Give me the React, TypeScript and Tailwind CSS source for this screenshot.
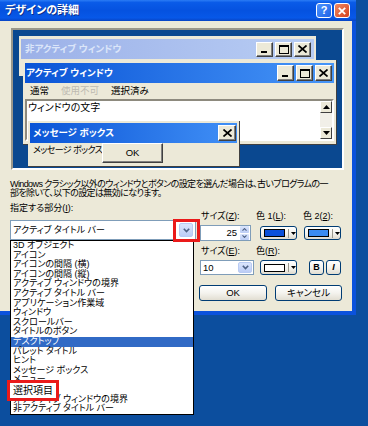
import React from "react";

// Caption button of the classic preview windows
function Caption({ kind, size = "h-[15px] w-[17px]" }: { kind: "min" | "max" | "close"; size?: string }) {
  return (
    <div
      className={`flex ${size} items-center justify-center border border-t-white border-l-white border-r-[#404040] border-b-[#404040] bg-[#ece9d8] shadow-[inset_-1px_-1px_0_#808080]`}
    >
      {kind === "min" && (
        <svg width="9" height="9" viewBox="0 0 9 9">
          <rect x="1" y="6" width="6" height="2" fill="#000" />
        </svg>
      )}
      {kind === "max" && (
        <svg width="10" height="9" viewBox="0 0 10 9">
          <rect x="0.5" y="0.5" width="9" height="8" fill="none" stroke="#000" />
          <rect x="0" y="0" width="10" height="2" fill="#000" />
        </svg>
      )}
      {kind === "close" && (
        <svg width="9" height="8" viewBox="0 0 9 8">
          <path d="M0.5 0.5 L8.5 7.5 M8.5 0.5 L0.5 7.5" stroke="#000" strokeWidth="1.7" />
        </svg>
      )}
    </div>
  );
}

function Chevron() {
  return (
    <svg width="7" height="5" viewBox="0 0 7 5">
      <path d="M0.8 0.8 L3.5 3.6 L6.2 0.8" fill="none" stroke="#4d6185" strokeWidth="1.6" />
    </svg>
  );
}

function ArrowBtn() {
  return (
    <div className="flex h-full w-[14px] items-center justify-center rounded-[2px] border border-[#b9cbf3] bg-[linear-gradient(#dbe5fc,#bccdf6)]">
      <Chevron />
    </div>
  );
}

function ColorBtn({ swatch, h }: { swatch: string; h: string }) {
  return (
    <div
      className={`flex ${h} w-[37px] items-center rounded-[3px] border border-[#003c74] bg-[linear-gradient(#ffffff,#f3f2ec_60%,#dedace)] pl-[3px]`}
    >
      <div className={`h-[8px] w-[21px] border border-black ${swatch}`} />
      <div className="ml-[3px] h-[9px] w-px bg-[#9c9a90]" />
      <svg className="ml-[2px]" width="5" height="3" viewBox="0 0 5 3">
        <path d="M0 0 H5 L2.5 3 Z" fill="#000" />
      </svg>
    </div>
  );
}

// "選択項目" (index 15) is drawn by the red mark laid over the list
const LIST = [
  "3D オブジェクト",
  "アイコン",
  "アイコンの間隔 (横)",
  "アイコンの間隔 (縦)",
  "アクティブ ウィンドウの境界",
  "アクティブ タイトル バー",
  "アプリケーション作業域",
  "ウィンドウ",
  "スクロールバー",
  "タイトルのボタン",
  "デスクトップ",
  "パレット タイトル",
  "ヒント",
  "メッセージ ボックス",
  "メニュー",
  "",
  "非アクティブ ウィンドウの境界",
  "非アクティブ タイトル バー",
];

const xpBtn =
  "flex items-center justify-center rounded-[3px] border border-[#003c74] bg-[linear-gradient(#ffffff,#f4f3ee_50%,#e2ded2)]";

export default function App() {
  return (
    <div className="relative h-[426px] w-[368px] overflow-hidden bg-[#0c4e9e] font-['Liberation_Sans','Noto_Sans_CJK_JP',sans-serif] text-black [font-feature-settings:'palt']">
      {/* dialog window */}
      <div className="w-[356px] bg-[#0b52dc]">
        {/* title bar */}
        <div className="flex h-[21px] items-center bg-[linear-gradient(180deg,#2b7cf5_0%,#0a5be8_12%,#0552e0_50%,#0758e8_85%,#0844c4_100%)] pl-[5px] pr-[6px]">
          <span className="text-[11px] font-bold leading-none text-white [text-shadow:1px_1px_#0a2f8a]">
            デザインの詳細
          </span>
          <div className="ml-auto flex gap-[2px]">
            <div className="flex h-[15px] w-[16px] items-center justify-center rounded-[3px] border border-white bg-[linear-gradient(135deg,#4d94ff,#1f62e6)] text-[11px] font-bold leading-none text-white">
              ?
            </div>
            <div className="flex h-[15px] w-[16px] items-center justify-center rounded-[3px] border border-white bg-[linear-gradient(135deg,#ef8a63,#d4401c)]">
              <svg width="8" height="8" viewBox="0 0 8 8">
                <path d="M0.8 0.8 L7.2 7.2 M7.2 0.8 L0.8 7.2" stroke="#fff" strokeWidth="1.8" />
              </svg>
            </div>
          </div>
        </div>

        <div className="pb-[4px] pr-[4px]">
          <div className="h-[290px] bg-[#ece9d8] pt-[7px]">
            {/* preview */}
            <div className="relative ml-[11px] h-[142px] w-[333px] border-2 border-t-[#9a978b] border-l-[#9a978b] border-b-white border-r-white bg-[#0a4890]">
              {/* inactive window */}
              <div className="absolute left-[6px] top-[6px] h-[40px] w-[297px] bg-[#ece9d8] px-[2px] pt-[3px]">
                <div className="flex h-[20px] items-center bg-[linear-gradient(90deg,#9cb1e8,#b8cdf4)] pl-[4px] pr-[3px]">
                  <span className="text-[9.5px] font-bold leading-none text-[#dbe5f9]">非アクティブ ウィンドウ</span>
                  <div className="ml-auto flex gap-[2px]">
                    <Caption kind="min" />
                    <Caption kind="max" />
                    <Caption kind="close" />
                  </div>
                </div>
              </div>

              {/* active window */}
              <div className="absolute left-[10px] top-[30px] h-[85px] w-[314px] border-r border-b border-r-[#404040] border-b-[#404040] bg-[#ece9d8] px-[2px] pt-[3px]">
                <div className="flex h-[20px] items-center bg-[linear-gradient(90deg,#0a54d6,#4796f8)] pl-[1px] pr-[2px]">
                  <span className="text-[9.5px] font-bold leading-none text-white">アクティブ ウィンドウ</span>
                  <div className="ml-auto flex gap-[2px]">
                    <Caption kind="min" size="h-[16px] w-[17px]" />
                    <Caption kind="max" size="h-[16px] w-[17px]" />
                    <Caption kind="close" size="h-[16px] w-[17px]" />
                  </div>
                </div>
                <div className="flex h-[16px] items-center pl-[5px] text-[9.5px] leading-none">
                  <span>通常</span>
                  <span className="ml-[12px] text-[#bdbab0]">使用不可</span>
                  <span className="ml-[12px]">選択済み</span>
                </div>
                <div className="flex h-[42px] border-2 border-t-[#8d8a7e] border-l-[#8d8a7e] border-b-white border-r-white bg-white">
                  <div className="flex-1 pl-[1px] pt-[1px] text-[10px] leading-[11px]">ウィンドウの文字</div>
                  <div className="flex w-[12px] flex-col bg-[#f1efe8]">
                    <div className="flex h-[12px] items-center justify-center border border-t-white border-l-white border-r-[#404040] border-b-[#404040] bg-[#ece9d8]">
                      <svg width="7" height="4" viewBox="0 0 7 4">
                        <path d="M3.5 0 L7 4 H0 Z" fill="#000" />
                      </svg>
                    </div>
                    <div className="flex-1" />
                    <div className="flex h-[12px] items-center justify-center border border-t-white border-l-white border-r-[#404040] border-b-[#404040] bg-[#ece9d8]">
                      <svg width="7" height="4" viewBox="0 0 7 4">
                        <path d="M0 0 H7 L3.5 4 Z" fill="#000" />
                      </svg>
                    </div>
                  </div>
                </div>
              </div>

              {/* message box */}
              <div className="absolute left-[15px] top-[91px] h-[46px] w-[212px] border-r border-b border-r-[#404040] border-b-[#404040] bg-[#ece9d8] px-[2px] pt-[2px]">
                <div className="flex h-[20px] items-center bg-[linear-gradient(90deg,#0a54d6,#4190f6)] pl-[3px] pr-[1px]">
                  <span className="text-[9.5px] font-bold leading-none text-white">メッセージ ボックス</span>
                  <div className="ml-auto">
                    <Caption kind="close" size="h-[16px] w-[18px]" />
                  </div>
                </div>
                <div className="whitespace-nowrap pl-[3px] pt-[3px] text-[9px] leading-none tracking-[-0.6px]">
                  メッセージ ボックスの文字
                </div>
                <div className="absolute left-[74px] top-[22px] flex h-[20px] w-[61px] items-center justify-center border border-t-white border-l-white border-r-[#404040] border-b-[#404040] bg-[#ece9d8] text-[9.5px] leading-none shadow-[inset_-1px_-1px_0_#808080]">
                  OK
                </div>
              </div>
            </div>

            {/* note */}
            <div className="ml-[10px] mt-[10px] whitespace-nowrap text-[9px] leading-[9px] tracking-[-0.6px]">
              <div>Windows クラシック以外のウィンドウとボタンの設定を選んだ場合は、古いプログラムの一</div>
              <div>部を除いて、以下の設定は無効になります。</div>
            </div>

            {/* controls */}
            <div className="mt-[6px] flex items-start">
              <div className="ml-[10px] w-[186px]">
                <div className="text-[9px] leading-[9px]">
                  指定する部分(<span className="underline">I</span>):
                </div>
                <div className="mt-[7px] flex h-[20px] items-center border border-[#7f9db9] bg-white py-[2px] pl-[2px] pr-[2px]">
                  <span className="flex-1 text-[9px] leading-none">アクティブ タイトル バー</span>
                  <ArrowBtn />
                </div>
              </div>

              <div className="ml-[4px] mt-[8px] w-[148px] text-[9px] leading-[9px]">
                <div className="flex">
                  <span className="w-[56px] pl-[1px]">
                    サイズ(<span className="underline">Z</span>):
                  </span>
                  <span className="w-[47px]">
                    色 1(<span className="underline">L</span>):
                  </span>
                  <span>
                    色 2(<span className="underline">2</span>):
                  </span>
                </div>
                <div className="mt-[4px] flex items-center">
                  <div className="flex h-[16px] w-[51px] items-center border border-[#7f9db9] bg-white">
                    <span className="flex-1 pr-[3px] text-right text-[9.5px] leading-none">25</span>
                    <div className="mr-[1px] flex h-[14px] w-[9px] flex-col gap-px">
                      <div className="flex flex-1 items-center justify-center rounded-[1px] bg-[linear-gradient(#dbe5fc,#bccdf6)]">
                        <svg width="5" height="3" viewBox="0 0 5 3">
                          <path d="M0.5 2.6 L2.5 0.6 L4.5 2.6" fill="none" stroke="#4d6185" strokeWidth="1.1" />
                        </svg>
                      </div>
                      <div className="flex flex-1 items-center justify-center rounded-[1px] bg-[linear-gradient(#dbe5fc,#bccdf6)]">
                        <svg width="5" height="3" viewBox="0 0 5 3">
                          <path d="M0.5 0.4 L2.5 2.4 L4.5 0.4" fill="none" stroke="#4d6185" strokeWidth="1.1" />
                        </svg>
                      </div>
                    </div>
                  </div>
                  <div className="ml-[9px]">
                    <ColorBtn swatch="bg-[#0a50da]" h="h-[14px]" />
                  </div>
                  <div className="ml-[7px]">
                    <ColorBtn swatch="bg-[#3b8cf2]" h="h-[14px]" />
                  </div>
                </div>

                <div className="mt-[6px] flex">
                  <span className="w-[56px] pl-[1px]">
                    サイズ(<span className="underline">E</span>):
                  </span>
                  <span>
                    色(<span className="underline">R</span>):
                  </span>
                </div>
                <div className="mt-[4px] flex items-center">
                  <div className="flex h-[15px] w-[54px] items-center border border-[#7f9db9] bg-white py-[1px] pl-[2px] pr-[1px]">
                    <span className="flex-1 text-[9.5px] leading-none">10</span>
                    <ArrowBtn />
                  </div>
                  <div className="ml-[6px]">
                    <ColorBtn swatch="bg-white" h="h-[15px]" />
                  </div>
                  <div className={`ml-[12px] h-[15px] w-[15px] ${xpBtn} text-[9px] font-bold leading-none`}>B</div>
                  <div className={`ml-[2px] h-[15px] w-[15px] ${xpBtn} text-[9px] font-bold italic leading-none`}>I</div>
                </div>

                <div className="mt-[10px] flex">
                  <div className={`-ml-px h-[16px] w-[68px] ${xpBtn} text-[9.5px] leading-none`}>OK</div>
                  <div className={`ml-[8px] h-[16px] w-[67px] ${xpBtn} text-[9.5px] leading-none`}>キャンセル</div>
                </div>
              </div>
            </div>
          </div>
        </div>
      </div>

      {/* open drop-down list */}
      <div className="absolute left-[10px] top-[240px] w-[184px] border border-black bg-white">
        {LIST.map((name, i) => (
          <div
            key={i}
            className={`h-[9.6px] whitespace-nowrap pl-[2px] text-[9px] leading-[9.6px] ${
              i === 10 ? "bg-[#316ac5] text-white" : ""
            }`}
          >
            {name}
          </div>
        ))}
      </div>

      {/* red marks */}
      <div className="absolute left-[173px] top-[219px] h-[23px] w-[27px] border-[3px] border-[#ea1a1a]" />
      <div className="absolute left-[7px] top-[380px] flex h-[21px] w-[52px] items-center border-[3px] border-[#ea1a1a] bg-white pl-[3px] text-[10px] leading-none">
        選択項目
      </div>
    </div>
  );
}
